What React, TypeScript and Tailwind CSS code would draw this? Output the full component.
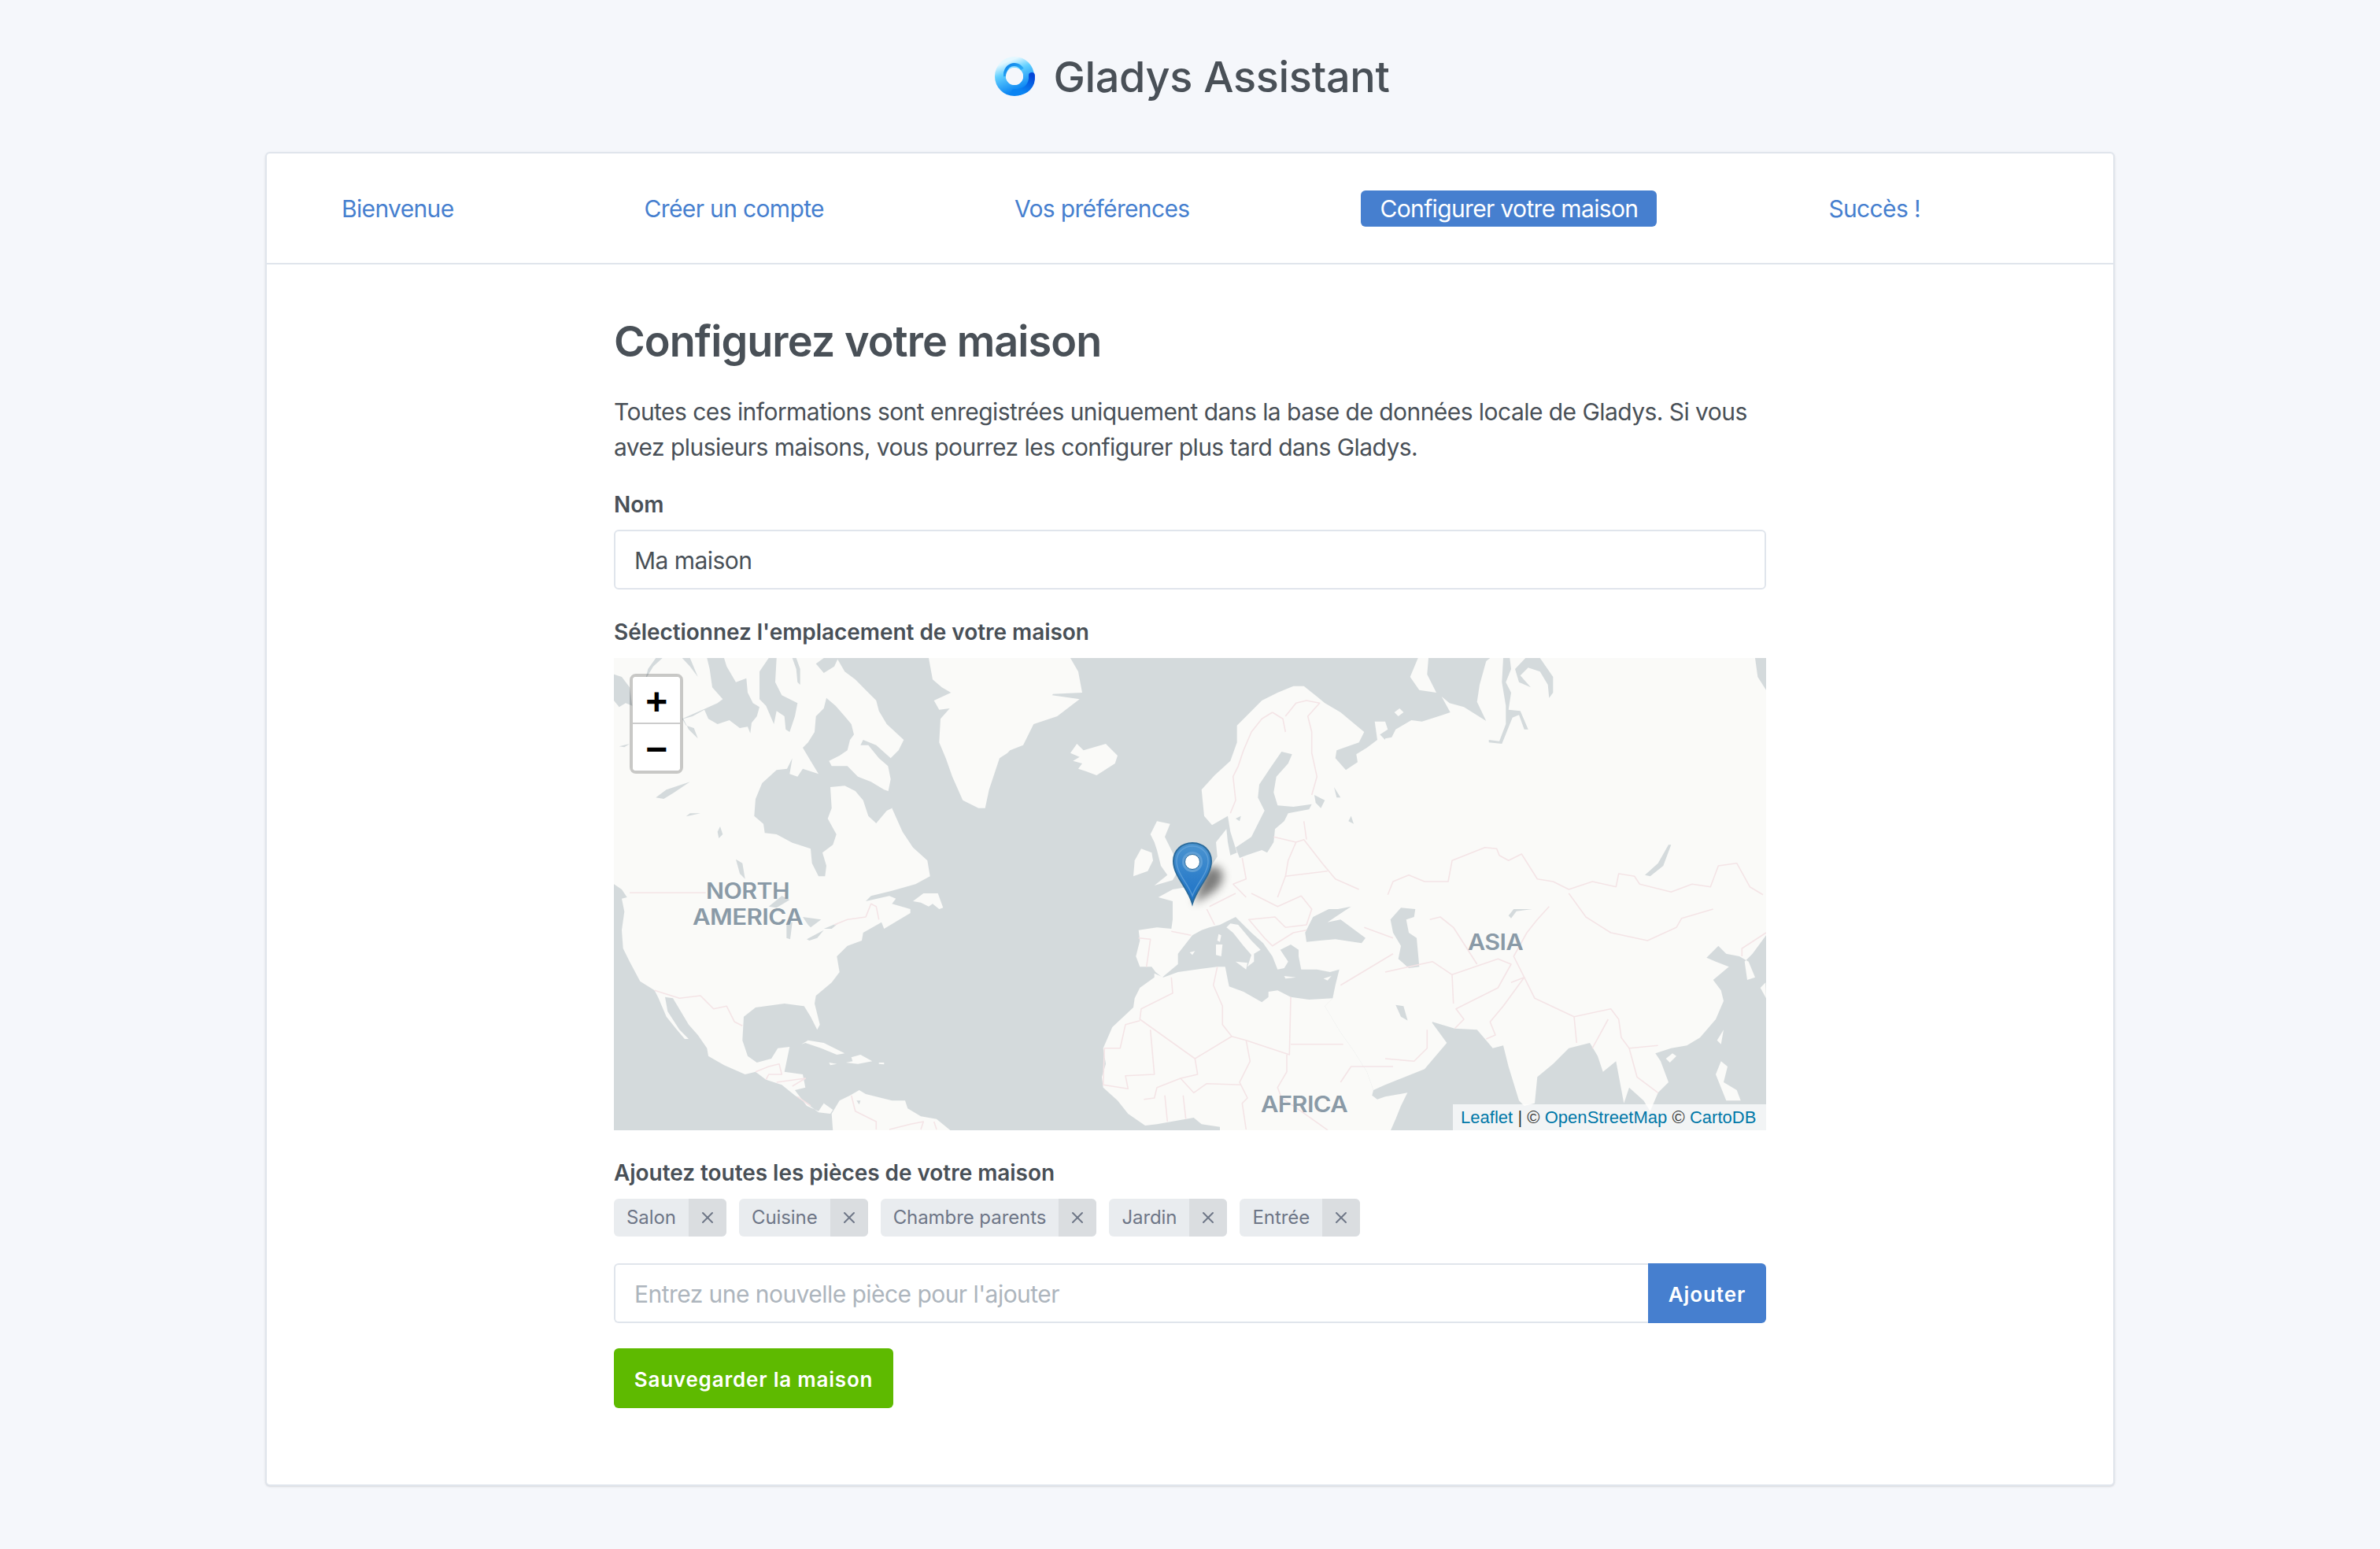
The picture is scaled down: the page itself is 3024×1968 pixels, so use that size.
import React from "react";
import { X } from "lucide-react";

// the map was traced from 3x crops, six tiles, so each polygon is written in tile coordinates
const OFFSETS = [
  [0, -6],
  [490, -6],
  [980, -6],
  [0, 299],
  [490, 299],
  [980, 299],
];

function T(tile: number, flat: number[]) {
  const [ox, oy] = OFFSETS[tile - 1];
  const out: string[] = [];
  for (let i = 0; i < flat.length; i += 2) {
    out.push(`${(flat[i] / 3 + ox).toFixed(1)},${(flat[i + 1] / 3 + oy).toFixed(1)}`);
  }
  return out.join(" ");
}

const LAND = [
  // north america
  T(1, [0,18,850,18,880,70,920,100,960,140,1000,180,1010,220,1040,270,1105,330,1085,370,1055,400,1000,350,950,330,940,350,970,350,1010,400,1045,430,1055,480,1045,530,1060,590,1100,680,1140,740,1195,790,1205,850,1150,880,1060,905,980,925]) +
    " " +
    T(4, [960,30,1050,10,1075,20,1060,40,1130,60,1130,75,1030,135,1020,110,950,150,945,180,890,200,850,240,860,300,830,340,770,390,765,420,785,500,775,520,750,470,725,430,650,420,540,435,495,470,490,560,510,620,545,645,600,630,625,590,670,585,650,680,720,690,730,740,690,750,735,810,780,830,800,800,835,825,825,840,780,835,720,790,690,770,640,730,580,710,540,680,500,690,420,655,360,620,355,590,320,540,285,500,225,400,195,395,205,450,250,520,285,555,270,555,240,520,200,470,170,400,155,370,100,335,60,260,35,210,30,140,40,70,30,20]) +
    " " +
    T(1, [50,930,30,900,0,880]),
  // greenland
  T(1, [1200,18,1215,100,1250,130,1285,150,1220,180,1240,215,1280,210,1245,250,1240,340,1265,400,1290,470,1330,560,1390,590,1415,590,1430,520,1470,400,1500,380]) +
    " " +
    T(2, [40,370,90,350,130,270,220,240,305,175,200,160,245,110,200,155,315,150,300,70,270,18]),
  // iceland
  T(2, [270,380,295,345,320,370,405,345,450,390,440,420,370,465,330,450,300,440,315,420,280,410,305,395]),
  // eurasia
  T(2, [905,275,950,230,1000,180,1060,150,1120,125,1160,125,1210,165,1240,190,1300,225,1390,300,1370,340,1285,370,1280,400,1320,445,1365,415,1360,385,1400,360,1440,330,1430,260,1470,260,1480,290,1450,310,1470,330]) +
    " " +
    T(3, [0,325,25,320,40,290,100,255,140,260,220,235,248,225,215,165,245,190,300,205,385,258,350,185,360,120,385,30,400,18,1410,18,1420,90,1452,140]) +
    " " +
    T(6, [1452,160,1400,230,1370,260,1380,330,1410,320,1385,260,1350,240,1300,230,1270,200,1225,245,1260,260,1310,280,1250,330,1280,370,1290,410,1260,480,1200,550,1150,580,1090,590,1030,610,1050,640,1080,720,1040,760,1010,830,985,790,930,740,910,800,880,640,830,680,810,620,780,570,700,590,640,650,580,700,570,800,530,810,510,790,470,660,450,580,410,590,385,560,350,520,265,515,180,490,170,530,120,530,90,500,70,430,40,425,60,470,130,510,180,495,235,570,150,670,0,730]) +
    " " +
    T(5, [1425,750,1400,680,1350,600,1300,530,1240,430,1270,400,1280,350,1295,290,1260,300,1210,290,1150,290,1140,240,1140,215,1110,195,1070,215,1100,260,1085,285,1060,290,1040,240,1005,190,960,150,920,110,900,90,880,100,840,120,800,130,770,140,735,160,680,230,680,270,620,320,595,300,580,280,535,280,520,240,535,180,530,140,600,130,655,135,660,100,660,30,605,15]) +
    " " +
    T(2, [660,900,720,890,800,820,830,775,825,720,865,670,870,720,880,770,905,760,880,680,870,620,810,655,780,620,770,520,820,465,880,410,905,340]),
  // africa
  T(5, [555,885,490,840,450,790,395,740,390,700,405,650,395,590,430,510,510,435,515,400,535,360,590,320,590,305,625,320,680,300,750,290,830,280,860,280,870,330,875,355,930,375,1000,415,1025,395,1025,375,1060,370,1110,395,1180,405,1270,400,1240,430,1300,530,1350,600,1400,680,1425,750,1420,770,1440,785]) +
    " " +
    T(6, [0,775,85,760,60,810,40,860,20,905]) +
    " " +
    T(5, [840,905,840,890,770,880,740,855,600,880]),
  // south america
  T(4, [835,905,830,840,860,790,900,770,935,750,960,765,1060,790,1110,790,1120,820,1170,850,1230,860,1285,905]),
  // islands
  T(4, [1140,30,1180,0,1235,0,1255,55,1240,60,1215,40,1200,50,1170,35]),
  T(4, [715,575,740,560,800,570,880,610,850,615,790,590,730,570]),
  T(4, [905,625,940,615,985,640,930,650,885,645,910,640]),
  T(4, [820,645,850,650,825,655]),
  T(4, [1010,645,1030,645,1030,652,1010,650]),
  T(2, [575,690,600,640,650,650,630,700,665,770,680,830,660,865,590,885,640,845,615,810,600,750,590,720]),
  T(2, [515,790,540,745,580,760,585,790,565,830,510,850]),
  T(3, [125,18,165,18,160,80,195,150,130,140,95,90]),
  T(3, [35,225,55,210,70,225,50,240]),
  T(5, [880,115,910,120,960,180,995,215,970,230,970,260,945,280,960,235,930,200,890,150,865,130]),
  T(5, [900,260,945,265,940,290]),
  T(5, [825,195,850,195,845,240,825,235]),
  T(5, [835,155,845,160,840,185,830,180]),
  T(5, [725,225,745,220,735,235]),
  T(5, [1085,315,1130,320,1090,325]),
  T(5, [1235,325,1265,315,1250,332]),
  T(6, [1265,560,1290,520,1280,575]),
  T(6, [1070,630,1095,610,1110,620,1085,645]),
  T(6, [1260,690,1280,640,1305,660,1290,720,1340,750,1355,790,1300,790]),
  T(6, [1430,360,1450,340,1452,400]),
];

const SEA = [
  // hudson bay and foxe basin
  T(1, [620,445,565,495,540,555,535,620,570,650,575,685,620,690,680,722,750,745,755,800,780,850,805,850,810,810,795,760,835,730,848,690,815,630,830,590,825,510,880,505,920,525,950,560,970,620,1000,648,1040,600,1060,590,1060,530,1030,520,980,490,930,470,890,430,830,430,820,410,860,390,890,370,900,330,915,310,905,270,880,240,845,200,810,170,800,210,770,240,765,300,740,340,720,360,750,410,780,460,720,440,700,470,670,460,680,400,660,440]),
  // arctic channels
  T(1, [355,18,420,18,430,50,465,110,505,95,510,150,530,190,555,205,545,240,525,265,520,305,510,280,480,285,440,255,395,270,360,250,345,215,300,240,265,250,285,290,320,325,305,285,275,275,260,250,350,210,395,190,415,175,375,130,365,60]),
  T(1, [555,70,590,18,620,18,615,110,640,160,700,190,690,240,670,300,655,290,650,240,620,220,610,270,580,200,555,175,555,130]),
  T(1, [680,18,695,18,710,60,710,120,700,110,695,60]),
  T(1, [770,40,800,18,855,18,840,50,800,75]),
  T(1, [0,80,30,90,60,130,70,200,45,190,20,205,0,180]),
  T(1, [130,60,160,18,185,18,150,50,120,100]),
  T(1, [260,18,290,18,320,90,290,50]),
  // canadian lakes
  T(1, [160,550,200,520,290,490,230,530,190,555]),
  T(1, [258,635,290,610,330,610,275,622]),
  T(1, [20,355,60,345,40,358]),
  T(1, [465,785,490,800,500,860,480,840]),
  T(1, [405,660,415,690,400,705,395,680]),
  T(4, [590,50,640,10,670,25,620,55]),
  T(4, [658,110,680,110,672,175,658,170]),
  T(4, [720,90,790,100,750,130,740,120]),
  T(4, [735,175,800,140,775,170,745,180]),
  T(4, [800,135,860,110,830,135]),
  // black sea and caspian
  T(5, [1165,150,1195,90,1255,60,1290,60,1340,50,1280,90,1250,110,1300,100,1395,170,1380,190,1280,175,1220,180,1170,185]),
  T(6, [20,100,60,55,115,60,110,90,80,100,90,150,120,170,130,280,90,285,50,250,60,200,30,150]),
  // baltic
  T(2, [1075,375,1115,385,1100,420,1055,470,1045,530,1060,580,1120,585,1190,575,1180,595,1100,610,1085,640,1050,670,1045,720,1020,760,1000,750,940,770,915,780,900,740,960,700,990,640,1010,600,985,550,990,500,1030,440]),
  T(2, [1200,540,1240,560,1225,590,1205,570]),
  T(2, [1275,510,1300,550,1285,550]),
  T(2, [900,630,920,620,915,640]),
  T(2, [1340,620,1350,650,1330,640]),
  // russian rivers
  T(3, [450,18,475,18,480,60,460,110,480,150,470,215,515,220,545,290,530,290,510,235,485,245,445,345,395,340,395,330,435,335,460,270,460,200,445,110]),
  T(3, [495,60,535,18,590,18,640,90,640,150,625,170,620,120,590,70,545,55,515,85,555,130,510,110]),
  T(3, [1080,730,1090,730,1060,810,1010,850,990,845,1040,800]),
  // small marks
  T(4, [925,790,940,790,935,805]),
  T(6, [470,85,490,60,560,60,500,68,480,95]),
];

const BORDERS = [
  // canada, usa, mexico, central america
  T(1, [60,913,350,913]),
  T(4, [840,120,890,100,960,90,980,40,1000,50,1010,100]),
  T(4, [155,370,250,400,330,390,380,440,430,430,460,490,490,505]),
  T(4, [540,680,590,660,630,650,640,690,590,690,580,710]),
  T(4, [620,720,730,705,680,735]),
  T(4, [700,775,750,810]),
  // south america
  T(4, [905,770,920,830,1000,870,1000,900]),
  T(4, [1050,900,1130,880,1180,870,1170,900]),
  T(4, [1220,870,1230,900]),
  // scandinavia
  T(2, [1040,225,1000,250,960,300,930,370,910,430,890,470,900,560,880,610]),
  T(2, [1040,225,1080,250,1090,300]),
  T(2, [1090,240,1130,190,1170,180,1220,190,1175,240,1190,300,1190,380,1210,470,1190,540]),
  // europe
  T(2, [1045,700,1130,720,1160,710,1230,800,1280,860,1370,900]),
  T(2, [925,780,940,860,890,880,940,930]),
  T(2, [1130,720,1100,790,1090,850,1250,830]),
  T(2, [1090,850,1060,930]),
  T(2, [1160,640,1170,710]),
  T(5, [800,50,900,0]),
  T(5, [960,0,1060,50,1150,10,1190,60,1170,120,1090,130,1050,90,950,100,1010,170,1040,200,1120,150,1170,140]),
  T(5, [790,60,820,120]),
  T(5, [530,170,575,175,560,280]),
  T(5, [655,145,730,160]),
  // russia and asia
  T(3, [10,920,30,870,90,845,150,870,240,870,255,790,380,740,425,745,435,770,470,790,520,765,580,860,640,870,700,900,790,870,880,890,890,840,950,850,970,880,1090,910,1170,880,1240,890,1270,810,1340,800,1390,890,1440,920]),
  T(6, [700,0,765,90,860,150,1000,180,1110,130,1130,95,1250,60]),
  T(6, [1452,150,1360,210,1360,240]),
  T(6, [625,50,580,100,540,150,490,240,530,320,570,400,720,470,860,440,890,480,900,550,930,590,1040,580]),
  T(6, [480,340,530,320,450,430,400,490,420,540,385,555]),
  T(6, [0,300,180,260,255,310,430,250,480,270,430,360,270,440,300,480,265,515]),
  T(6, [255,310,260,420]),
  T(6, [0,630,110,640,160,590,160,520]),
  T(6, [720,470,730,570]),
  T(6, [790,590,850,480]),
  T(6, [930,590,960,700,1040,760]),
  T(6, [170,100,210,90,260,130,350,270]),
  // africa
  T(5, [655,320,660,380,540,440,535,480,745,630,885,545,850,500,850,430,815,350,830,280]),
  T(5, [885,545,940,560,1105,615,1110,395]),
  T(5, [1110,575,1310,575]),
  T(5, [940,560,955,640,915,720,945,780,925,800,940,900]),
  T(5, [1095,615,1095,680,1060,740,1075,780,1135,820,1250,902]),
  T(5, [745,630,755,690,690,705,600,740,590,780,550,785]),
  T(5, [575,520,590,690,480,695,490,745,395,730,400,590,460,590,480,500,535,485]),
  T(5, [690,705,740,760,790,725,920,730]),
  T(5, [630,770,640,870]),
  T(5, [700,770,710,860]),
  T(5, [1300,720,1340,660,1500,660]),
  T(5, [1390,130,1500,170]),
  T(5, [1300,350,1400,290,1500,230]),
];

function WorldMap() {
  return (
    <svg viewBox="0 0 1464 600" className="block w-full h-full">
      <defs>
        <filter id="soft" x="-5%" y="-5%" width="110%" height="110%">
          <feGaussianBlur stdDeviation="0.7" />
        </filter>
        <filter id="pinShadow" x="-80%" y="-80%" width="260%" height="260%">
          <feGaussianBlur stdDeviation="6" />
        </filter>
        <linearGradient id="pinFill" x1="0" y1="0" x2="0" y2="1">
          <stop offset="0" stopColor="#4b94d0" />
          <stop offset="1" stopColor="#1a70c6" />
        </linearGradient>
      </defs>
      <rect width="1464" height="600" fill="#d4dadc" />
      <g filter="url(#soft)">
        {LAND.map((p, i) => (
          <polygon key={i} points={p} fill="#fafaf8" />
        ))}
        {SEA.map((p, i) => (
          <polygon key={i} points={p} fill="#d4dadc" />
        ))}
        {BORDERS.map((p, i) => (
          <polyline
            key={i}
            points={p}
            fill="none"
            stroke="#f4e4e6"
            strokeWidth="1.6"
            strokeLinejoin="round"
          />
        ))}
      </g>
      <g
        fontFamily="Inter, sans-serif"
        fontWeight="600"
        fontSize="28"
        fill="#8a9aa7"
      >
        <text x="117" y="306" textLength="106" lengthAdjust="spacingAndGlyphs">NORTH</text>
        <text x="100" y="339" textLength="140" lengthAdjust="spacingAndGlyphs">AMERICA</text>
        <text x="1085" y="371" textLength="70" lengthAdjust="spacingAndGlyphs">ASIA</text>
        <text x="822" y="577" textLength="110" lengthAdjust="spacingAndGlyphs">AFRICA</text>
      </g>
      {/* marker, the shadow falls to the upper right like leaflet's default one */}
      <path
        d="M737 312 L762 297 Q778 284 772 270 Q760 256 748 276 Z"
        fill="#000"
        opacity="0.5"
        filter="url(#pinShadow)"
      />
      <path
        d="M735 312 C729 291 711 277 711 258 C711 244 722 235 735 235 C748 235 759 244 759 258 C759 277 741 291 735 312 Z"
        fill="url(#pinFill)"
        stroke="#2b6b9c"
        strokeWidth="2"
      />
      <path
        d="M735 302 C730 287 715 274 715 258 C715 247 724 239 735 239 C746 239 755 247 755 258 C755 274 740 287 735 302 Z"
        fill="none"
        stroke="#6aa7da"
        strokeWidth="1.5"
        opacity="0.7"
      />
      <circle cx="735" cy="259" r="13" fill="#5f9fd6" />
      <circle cx="735" cy="259" r="9.5" fill="#fff" stroke="#2b6b9c" strokeWidth="1" />
    </svg>
  );
}

function Logo() {
  return (
    <svg viewBox="0 0 52 52" className="w-[52px] h-[52px]">
      <defs>
        <linearGradient id="ringOuter" x1="0.2" y1="0" x2="0.6" y2="1">
          <stop offset="0" stopColor="#e4f8ff" />
          <stop offset="0.35" stopColor="#62d0ff" />
          <stop offset="1" stopColor="#0a84f2" />
        </linearGradient>
        <linearGradient id="ringInner" x1="0" y1="0" x2="1" y2="1">
          <stop offset="0" stopColor="#0a7fe8" />
          <stop offset="1" stopColor="#3cc2ff" />
        </linearGradient>
        <linearGradient id="ringTail" x1="0.5" y1="1" x2="1" y2="0">
          <stop offset="0" stopColor="#0a84f2" />
          <stop offset="1" stopColor="#0346d8" />
        </linearGradient>
      </defs>
      <circle cx="25" cy="26" r="18" fill="none" stroke="url(#ringOuter)" strokeWidth="14" />
      <path d="M13 26 A12 13 0 0 1 35 17" fill="none" stroke="url(#ringInner)" strokeWidth="4" />
      <path
        d="M47 25 C48 37 40 47 25 46"
        fill="none"
        stroke="url(#ringTail)"
        strokeWidth="8"
        strokeLinecap="round"
      />
      <circle cx="25" cy="26" r="11" fill="#f5f7fb" />
    </svg>
  );
}

const STEPS = ["Bienvenue", "Créer un compte", "Vos préférences", "Configurer votre maison", "Succès !"];
const ROOMS = ["Salon", "Cuisine", "Chambre parents", "Jardin", "Entrée"];

export default function App() {
  return (
    <div className="min-h-[1968px] bg-[#f5f7fb] font-[Inter,sans-serif] text-[#495057] text-[30px] leading-[45px] tracking-[-0.55px]">
      <header className="h-[193px] flex items-center justify-center gap-[22px] pl-[6px]">
        <Logo />
        <div className="pt-[2px] text-[54px] font-medium leading-none tracking-[-0.3px]">Gladys Assistant</div>
      </header>

      <main className="mx-auto w-[2350px] h-[1695px] bg-white border-2 border-[#e0e5ec] rounded-md shadow-sm">
        <nav className="h-[141px] flex items-center pl-[71px] gap-[194px] tracking-[-0.65px] border-b-2 border-[#e0e5ec]">
          {STEPS.map((step) => (
            <a
              key={step}
              href="#"
              className={
                step === "Configurer votre maison"
                  ? "px-6 pt-0.5 h-[46px] flex items-center rounded-md bg-[#467fcf] text-white"
                  : "px-6 pt-0.5 h-[46px] flex items-center text-[#467fcf]"
              }
            >
              {step}
            </a>
          ))}
        </nav>

        <div className="mx-auto w-[1464px] pt-[64px]">
          <h1 className="text-[54px] font-semibold leading-[67px] tracking-[-0.95px]">Configurez votre maison</h1>
          <p className="mt-[34px]">
            Toutes ces informations sont enregistrées uniquement dans la base de données locale de
            Gladys. Si vous avez plusieurs maisons, vous pourrez les configurer plus tard dans
            Gladys.
          </p>

          <label className="block mt-[29px] mb-[11px] text-[28px] font-semibold leading-[42px] tracking-[-0.05px]">Nom</label>
          <input
            readOnly
            value="Ma maison"
            className="block w-full h-[76px] px-[24px] pt-[2px] border-2 border-[#e0e5ec] rounded-md bg-white outline-none"
          />

          <label className="block mt-[33px] mb-[12px] text-[28px] font-semibold leading-[42px] tracking-[-0.05px]">
            Sélectionnez l'emplacement de votre maison
          </label>
          <div className="relative h-[600px] overflow-hidden">
            <WorldMap />
            <div className="absolute left-[20px] top-[20px] w-[68px] h-[127px] border-4 border-black/20 rounded-lg bg-clip-padding">
              <div className="h-[60px] pt-[6px] flex items-center justify-center bg-white rounded-t border-b-2 border-[#ccc] text-black font-['Liberation_Sans'] font-bold text-[48px] leading-none">
                +
              </div>
              <div className="h-[59px] pt-[5px] flex items-center justify-center bg-white rounded-b text-black font-['Liberation_Sans'] font-bold text-[48px] leading-none">
                −
              </div>
            </div>
            <div className="absolute right-0 bottom-0 h-[33px] w-[398px] pl-[10px] flex items-center bg-white/70 font-['Liberation_Sans'] text-[22px] leading-none tracking-[0.03px] text-[#333] whitespace-pre">
              <a href="#" className="text-[#0078a8]">Leaflet</a>
              <span> | © </span>
              <a href="#" className="text-[#0078a8]">OpenStreetMap</a>
              <span> © </span>
              <a href="#" className="text-[#0078a8]">CartoDB</a>
            </div>
          </div>

          <label className="block mt-[33px] mb-[12px] text-[28px] font-semibold leading-[42px] tracking-[-0.05px]">
            Ajoutez toutes les pièces de votre maison
          </label>
          <div className="flex gap-4">
            {ROOMS.map((room) => (
              <span
                key={room}
                className="flex h-[48px] items-center rounded-md bg-[#e9ecef] text-[#6e7687] text-[24px] leading-none tracking-[-0.07px] overflow-hidden"
              >
                <span className="px-4">{room}</span>
                <span className="w-[48px] h-full flex items-center justify-center bg-[#dadde0]">
                  <X size={24} strokeWidth={2} />
                </span>
              </span>
            ))}
          </div>

          <div className="flex mt-[34px]">
            <input
              readOnly
              placeholder="Entrez une nouvelle pièce pour l'ajouter"
              className="flex-1 h-[76px] px-[24px] pt-[2px] border-2 border-r-0 border-[#e0e5ec] rounded-l-md bg-white outline-none placeholder:text-[#adb5bd]"
            />
            <button className="w-[150px] h-[76px] pt-[2px] rounded-r-md bg-[#467fcf] text-white text-[26px] font-semibold tracking-[0.9px]">
              Ajouter
            </button>
          </div>

          <button className="block mt-[32px] w-[355px] h-[76px] pt-[2px] rounded-md bg-[#5eba00] text-white text-[26px] font-semibold tracking-[0.8px]">
            Sauvegarder la maison
          </button>
        </div>
      </main>
    </div>
  );
}
